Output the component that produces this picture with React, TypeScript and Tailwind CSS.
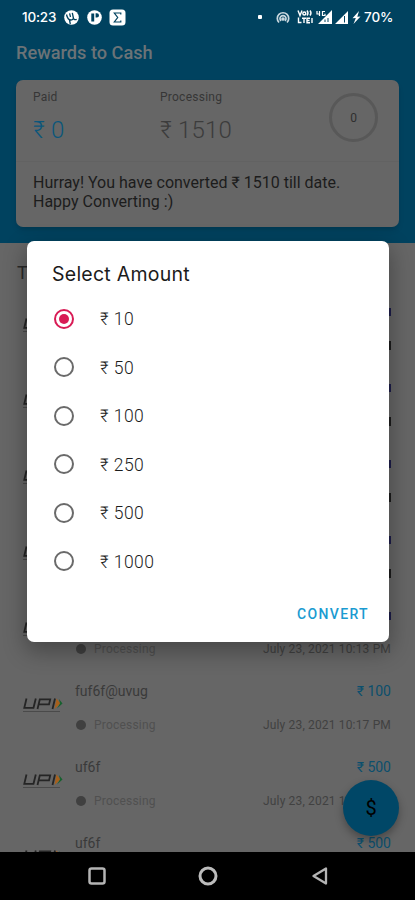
import { clsx } from "clsx";

type Payout = { upi?: string; amount?: string; date?: string };

const AMOUNTS = [10, 50, 100, 250, 500, 1000];

const PAYOUTS: Payout[] = [
    {},
    {},
    {},
    {},
    { date: "July 23, 2021 10:13 PM" },
    { upi: "fuf6f@uvug", amount: "₹ 100", date: "July 23, 2021 10:17 PM" },
    { upi: "uf6f", amount: "₹ 500", date: "July 23, 2021 1" },
    { upi: "uf6f", amount: "₹ 500" },
];

function StatusBar() {
    return (
        <div className="flex h-8 items-center pl-[22px] pr-[21px] pt-[2px] text-white">
            <span className="w-[35px] font-[Inter,sans-serif] text-[13.500px] font-medium leading-4 tracking-[-0.2px] whitespace-nowrap">10:23</span>
            <svg className="ml-[7px]" width="15" height="15" viewBox="0 0 15 15">
                <circle cx="7.5" cy="7.5" r="7.3" fill="#fff" />
                <path d="M2.500 4.500c.6 3 1.500 5.500 4.500 5.500 2 0 2.600-1.200 2.200-3L8.300 2.800M5.600 3.300l.9 3.700M9.300 8c.6 1.700 1.800 2 3.400 1.300M5.500 10l.8 4" fill="none" stroke="#00425f" strokeWidth="1.300" />
            </svg>
            <svg className="ml-2" width="15" height="15" viewBox="0 0 15 15">
                <circle cx="7.5" cy="7.5" r="7.3" fill="#fff" />
                <path d="M4.300 3.500h2.900v8H4.300zM8.600 3.300h1.300a2 2 0 0 1 0 4.200H8.600z" fill="#00425f" />
            </svg>
            <svg className="ml-[7px]" width="17" height="17" viewBox="0 0 17 17">
                <rect x=".5" y=".5" width="16" height="16" rx="3.500" fill="#fff" />
                <path d="M11.800 5.500V4H5.300l3.400 4.500L5.300 13h6.500v-1.500" fill="none" stroke="#00425f" strokeWidth="1.200" />
            </svg>
            <span className="ml-auto h-[4px] w-[4px] rounded-[1px] bg-white" />
            <svg className="ml-[14px]" width="14" height="13" viewBox="0 0 14 13" fill="none" stroke="#c9d8df" strokeWidth="1.700">
                <path d="M3 11.500A5.700 5.700 0 1 1 11 11.500M5 9.800a3 3 0 1 1 4 0" />
                <circle cx="7" cy="8" r="1" fill="#c9d8df" />
            </svg>
            <svg className="ml-[7px]" width="17" height="14" viewBox="0 0 17 14" fill="none" stroke="#fff" strokeWidth="1.400">
                <path d="M1 .5 3 5.500 5 .5M10 .5q2 2.500 0 5M13 .5q2 2.500 0 5M1.500 7.500v5h3M5 8.200h4M7 8v5M13 8.200h-3v4.500h3M10 10.500h2.500M15 8v5" />
                <circle cx="7.300" cy="3.500" r="1.500" />
            </svg>
            <svg className="ml-[2px]" width="33" height="15" viewBox="0 0 33 15">
                <path d="M16 0v14H2zM32 1v13H19z" fill="#fff" />
                <path d="M28.500 6v6.500M9 9.500v2.500M12 8v4" stroke="#00425f" strokeWidth="1" />
                <path d="M1 1v3h3M3.500 1v5M9 1.500H6.500v4H9V3.800" fill="none" stroke="#fff" strokeWidth="1.200" />
            </svg>
            <svg className="ml-[3px]" width="9" height="13" viewBox="0 0 9 13">
                <path d="M7 0 .5 7.300l3.300-.3L1.500 13 8.500 5.500l-3.200.3z" fill="#fff" />
            </svg>
            <span className="ml-[3px] w-[30px] font-[Inter,sans-serif] text-[13.500px] font-medium leading-4 tracking-[-0.1px] whitespace-nowrap">70%</span>
        </div>
    );
}

function UpiLogo() {
    return (
        <svg width="42" height="18" viewBox="0 0 42 18" fill="none">
            <path d="M4.500 1.500 2.300 10.800h9.200L13.800 1.500M15.500 12 17.800 2.400h10.400l-1.200 5H17M33 1.500 30.500 12" stroke="#252525" strokeWidth="1.800" />
            <path d="M34.500 1.500 38.500 6.500 32.500 12z" fill="#a6601c" />
            <path d="M37 2 40.500 6.500 35 11.500 38 6.500z" fill="#17612f" />
            <path d="M1 14.500h37" stroke="#4a4a4a" strokeWidth="1.200" />
        </svg>
    );
}

function PayoutRow({ upi, amount, date }: Payout) {
    return (
        <li className="flex h-[76px] shrink-0 pl-[22px] pr-6">
            <div className="w-[53px] pt-[23px]">
                <UpiLogo />
            </div>
            <div className="flex-1">
                <div className="flex h-[35px] items-center justify-between">
                    <span className="text-[14px] text-[#3a3a3a]">{upi}</span>
                    {amount ? (
                        <span className="text-[14px] text-[#0b4f6d]">{amount}</span>
                    ) : (
                        <span className="h-[8px] w-[3px] bg-[#1d1d4a]" />
                    )}
                </div>
                {date ? (
                    <div className="flex h-[32px] items-center text-[12px] text-[#414141]">
                        <span className="ml-[1px] h-[10px] w-[10px] rounded-full bg-[#404040]" />
                        <span className="ml-2 w-[169px] text-[#505050] tracking-[0.2px]">Processing</span>
                        <span className="tracking-[0.16px] whitespace-nowrap">{date}</span>
                    </div>
                ) : (
                    <div className="flex h-[32px] items-center justify-end">
                        <span className="h-[9px] w-[3px] bg-[#1c1c1c]" />
                    </div>
                )}
            </div>
        </li>
    );
}

function SummaryCard() {
    return (
        <section className="mx-4 mt-4 h-[147px] rounded-[7px] bg-[#666] shadow-md">
            <div className="flex h-[82px] border-b border-[#626262] pl-[17px] pr-[21px] pt-[9px]">
                <div className="w-[127px]">
                    <p className="text-[12px] leading-4 tracking-[0.2px] text-[#363636]">Paid</p>
                    <p className="mt-[10px] text-[24px] font-light leading-[31px] tracking-[0.2px] text-[#0b567b]">₹ 0</p>
                </div>
                <div className="flex-1">
                    <p className="text-[12px] leading-4 tracking-[0.25px] text-[#363636]">Processing</p>
                    <p className="mt-[10px] text-[24px] font-light leading-[31px] tracking-[0.2px] text-[#3c3c3c]">₹ 1510</p>
                </div>
                <div className="mt-1 flex h-[49px] w-[49px] items-center justify-center rounded-full border-[3px] border-[#585858] text-[12px] text-[#2f2f2f]">
                    0
                </div>
            </div>
            <p className="px-[17px] pt-[11px] text-[16px] leading-[19px] text-[#1c1c1c]">
                Hurray! You have converted ₹ 1510 till date.
                <br />
                Happy Converting :)
            </p>
        </section>
    );
}

function AmountDialog() {
    return (
        <div role="dialog" className="absolute left-[27px] top-[241px] flex h-[401px] w-[362px] flex-col rounded-[7px] bg-white shadow-[0_8px_22px_2px_rgba(0,0,0,0.3)]">
            <h2 className="pl-[25px] pt-5 font-[Inter,sans-serif] text-[19.500px] leading-[26px] tracking-[0.25px] text-[#1b1b1b]">Select Amount</h2>
            <ul className="mt-[7.500px]">
                {AMOUNTS.map((amount, i) => (
                    <li key={amount} className="flex h-[48.500px] items-center pl-[27px]">
                        <span className={clsx("flex h-[20px] w-[20px] items-center justify-center rounded-full border-2", i === 0 ? "border-[#d81b55]" : "border-[#6a6a6a]")}>
                            {i === 0 && <span className="h-[10px] w-[10px] rounded-full bg-[#d81b55]" />}
                        </span>
                        <span className="ml-[26px] pt-px text-[17.500px] font-light leading-5 tracking-[0.45px] text-[#1c1c1c]">₹ {amount}</span>
                    </li>
                ))}
            </ul>
            <button className="mb-[18px] mr-5 mt-auto self-end text-[14px] font-medium leading-5 tracking-[1.350px] text-[#1a9bd1]">CONVERT</button>
        </div>
    );
}

export default function App() {
    return (
        <div className="relative flex h-[900px] w-[415px] flex-col overflow-hidden bg-[#666] font-[Roboto,sans-serif]">
            <header className="h-[243px] shrink-0 bg-[#00425f]">
                <StatusBar />
                <h1 className="h-8 pl-4 pt-2 text-[18.200px] font-medium leading-[25px] text-[#6b7377]">Rewards to Cash</h1>
                <SummaryCard />
            </header>
            <main className="flex min-h-0 flex-1 flex-col overflow-hidden">
                <h2 className="h-[51px] shrink-0 pl-[17px] pt-[18px] text-[18px] leading-6 text-[#292929]">T</h2>
                <ul className="flex flex-col">
                    {PAYOUTS.map((payout, i) => (
                        <PayoutRow key={i} {...payout} />
                    ))}
                </ul>
            </main>
            <nav className="flex h-12 shrink-0 items-center bg-black">
                <svg className="ml-[88px]" width="18" height="18" viewBox="0 0 18 18">
                    <rect x="1.500" y="1.500" width="15" height="15" rx="2" fill="none" stroke="#b4b4b4" strokeWidth="2.500" />
                </svg>
                <svg className="ml-[92px]" width="20" height="20" viewBox="0 0 20 20">
                    <circle cx="10" cy="10" r="8" fill="none" stroke="#bcbcbc" strokeWidth="3" />
                </svg>
                <svg className="ml-[93px]" width="18" height="18" viewBox="0 0 18 18">
                    <path d="M15 1.500v15L2.500 9z" fill="none" stroke="#b4b4b4" strokeWidth="2.300" strokeLinejoin="round" />
                </svg>
            </nav>
            <button className="absolute left-[343px] top-[780px] flex h-14 w-14 items-center justify-center rounded-full bg-[#004767] text-black shadow-[0_4px_8px_rgba(0,0,0,0.3)]">
                <span className="text-[20px] leading-6">$</span>
            </button>
            <AmountDialog />
        </div>
    );
}
